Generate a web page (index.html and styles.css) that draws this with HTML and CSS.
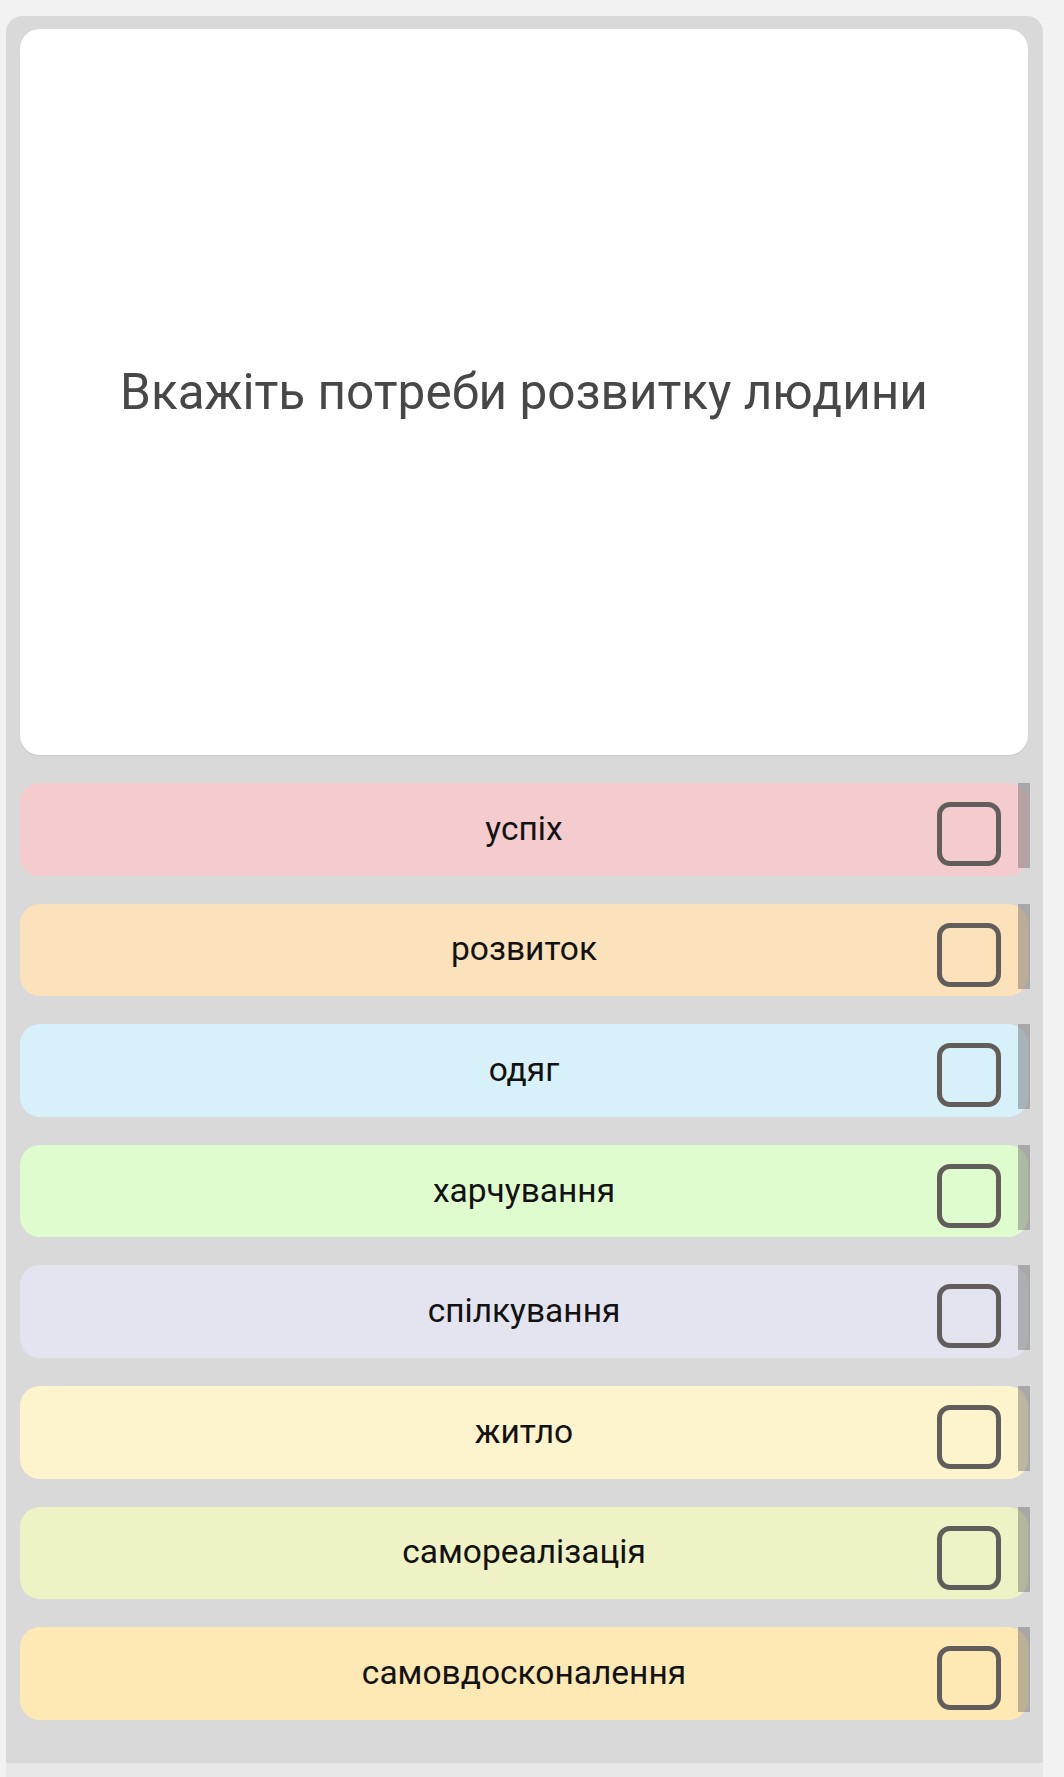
FILE: index.html
```html
<!DOCTYPE html>
<html lang="uk">
<head>
<meta charset="utf-8">
<link rel="stylesheet" href="styles.css">
</head>
<body>
<div class="panel">
  <div class="card">
    <div class="question">Вкажіть потреби розвитку людини</div>
  </div>
  <div class="options">
    <div class="option c1"><span class="label">успіх</span><span class="box"></span><span class="bar"></span></div>
    <div class="option c2"><span class="label">розвиток</span><span class="box"></span><span class="bar"></span></div>
    <div class="option c3"><span class="label">одяг</span><span class="box"></span><span class="bar"></span></div>
    <div class="option c4"><span class="label">харчування</span><span class="box"></span><span class="bar"></span></div>
    <div class="option c5"><span class="label">спілкування</span><span class="box"></span><span class="bar"></span></div>
    <div class="option c6"><span class="label">житло</span><span class="box"></span><span class="bar"></span></div>
    <div class="option c7"><span class="label">самореалізація</span><span class="box"></span><span class="bar"></span></div>
    <div class="option c8"><span class="label">самовдосконалення</span><span class="box"></span><span class="bar"></span></div>
  </div>
</div>
<div class="footer"></div>
</body>
</html>
```
FILE: styles.css
```css
html, body {
  margin: 0;
  padding: 0;
  background: #f2f2f2;
}
body {
  padding-top: 16px;
  font-family: Roboto, "Noto Sans", "Liberation Sans", sans-serif;
}
.panel {
  margin-left: 6px;
  width: 1037px;
  box-sizing: border-box;
  background: #d9d9d9;
  border-radius: 16px 16px 0 0;
  padding: 13px 15px 43px 14px;
}
.card {
  height: 726px;
  background: #ffffff;
  border-radius: 20px;
  box-shadow: 0 1px 1px rgba(0, 0, 0, 0.08);
  display: flex;
  align-items: center;
  justify-content: center;
}
.question {
  font-size: 49.5px;
  color: #474747;
  text-align: center;
}
.options {
  display: flex;
  flex-direction: column;
  gap: 28px;
  margin-top: 28px;
}
.option {
  position: relative;
  height: 92.6px;
  flex: none;
  border-radius: 20px;
  display: flex;
  align-items: center;
  justify-content: center;
}
.label {
  font-size: 33.5px;
  color: #121212;
  margin-top: -2px;
}
.box {
  position: absolute;
  right: 27px;
  top: 19px;
  width: 64px;
  height: 64px;
  box-sizing: border-box;
  border: 5px solid #605d5a;
  border-radius: 13px;
}
.bar {
  position: absolute;
  right: -2px;
  top: 0;
  width: 12px;
  height: 85px;
  background: rgba(100, 100, 100, 0.42);
}
.c1 { background: #f5cccd; }
.c2 { background: #fbe2bb; }
.c3 { background: #d8f0fa; }
.c4 { background: #dffccf; }
.c5 { background: #e4e4f0; }
.c6 { background: #fdf3cc; }
.c7 { background: #eff2c4; }
.c8 { background: #fee9b5; }
.footer {
  margin-left: 6px;
  width: 1037px;
  height: 15px;
  background: #e8e8e8;
}
```
